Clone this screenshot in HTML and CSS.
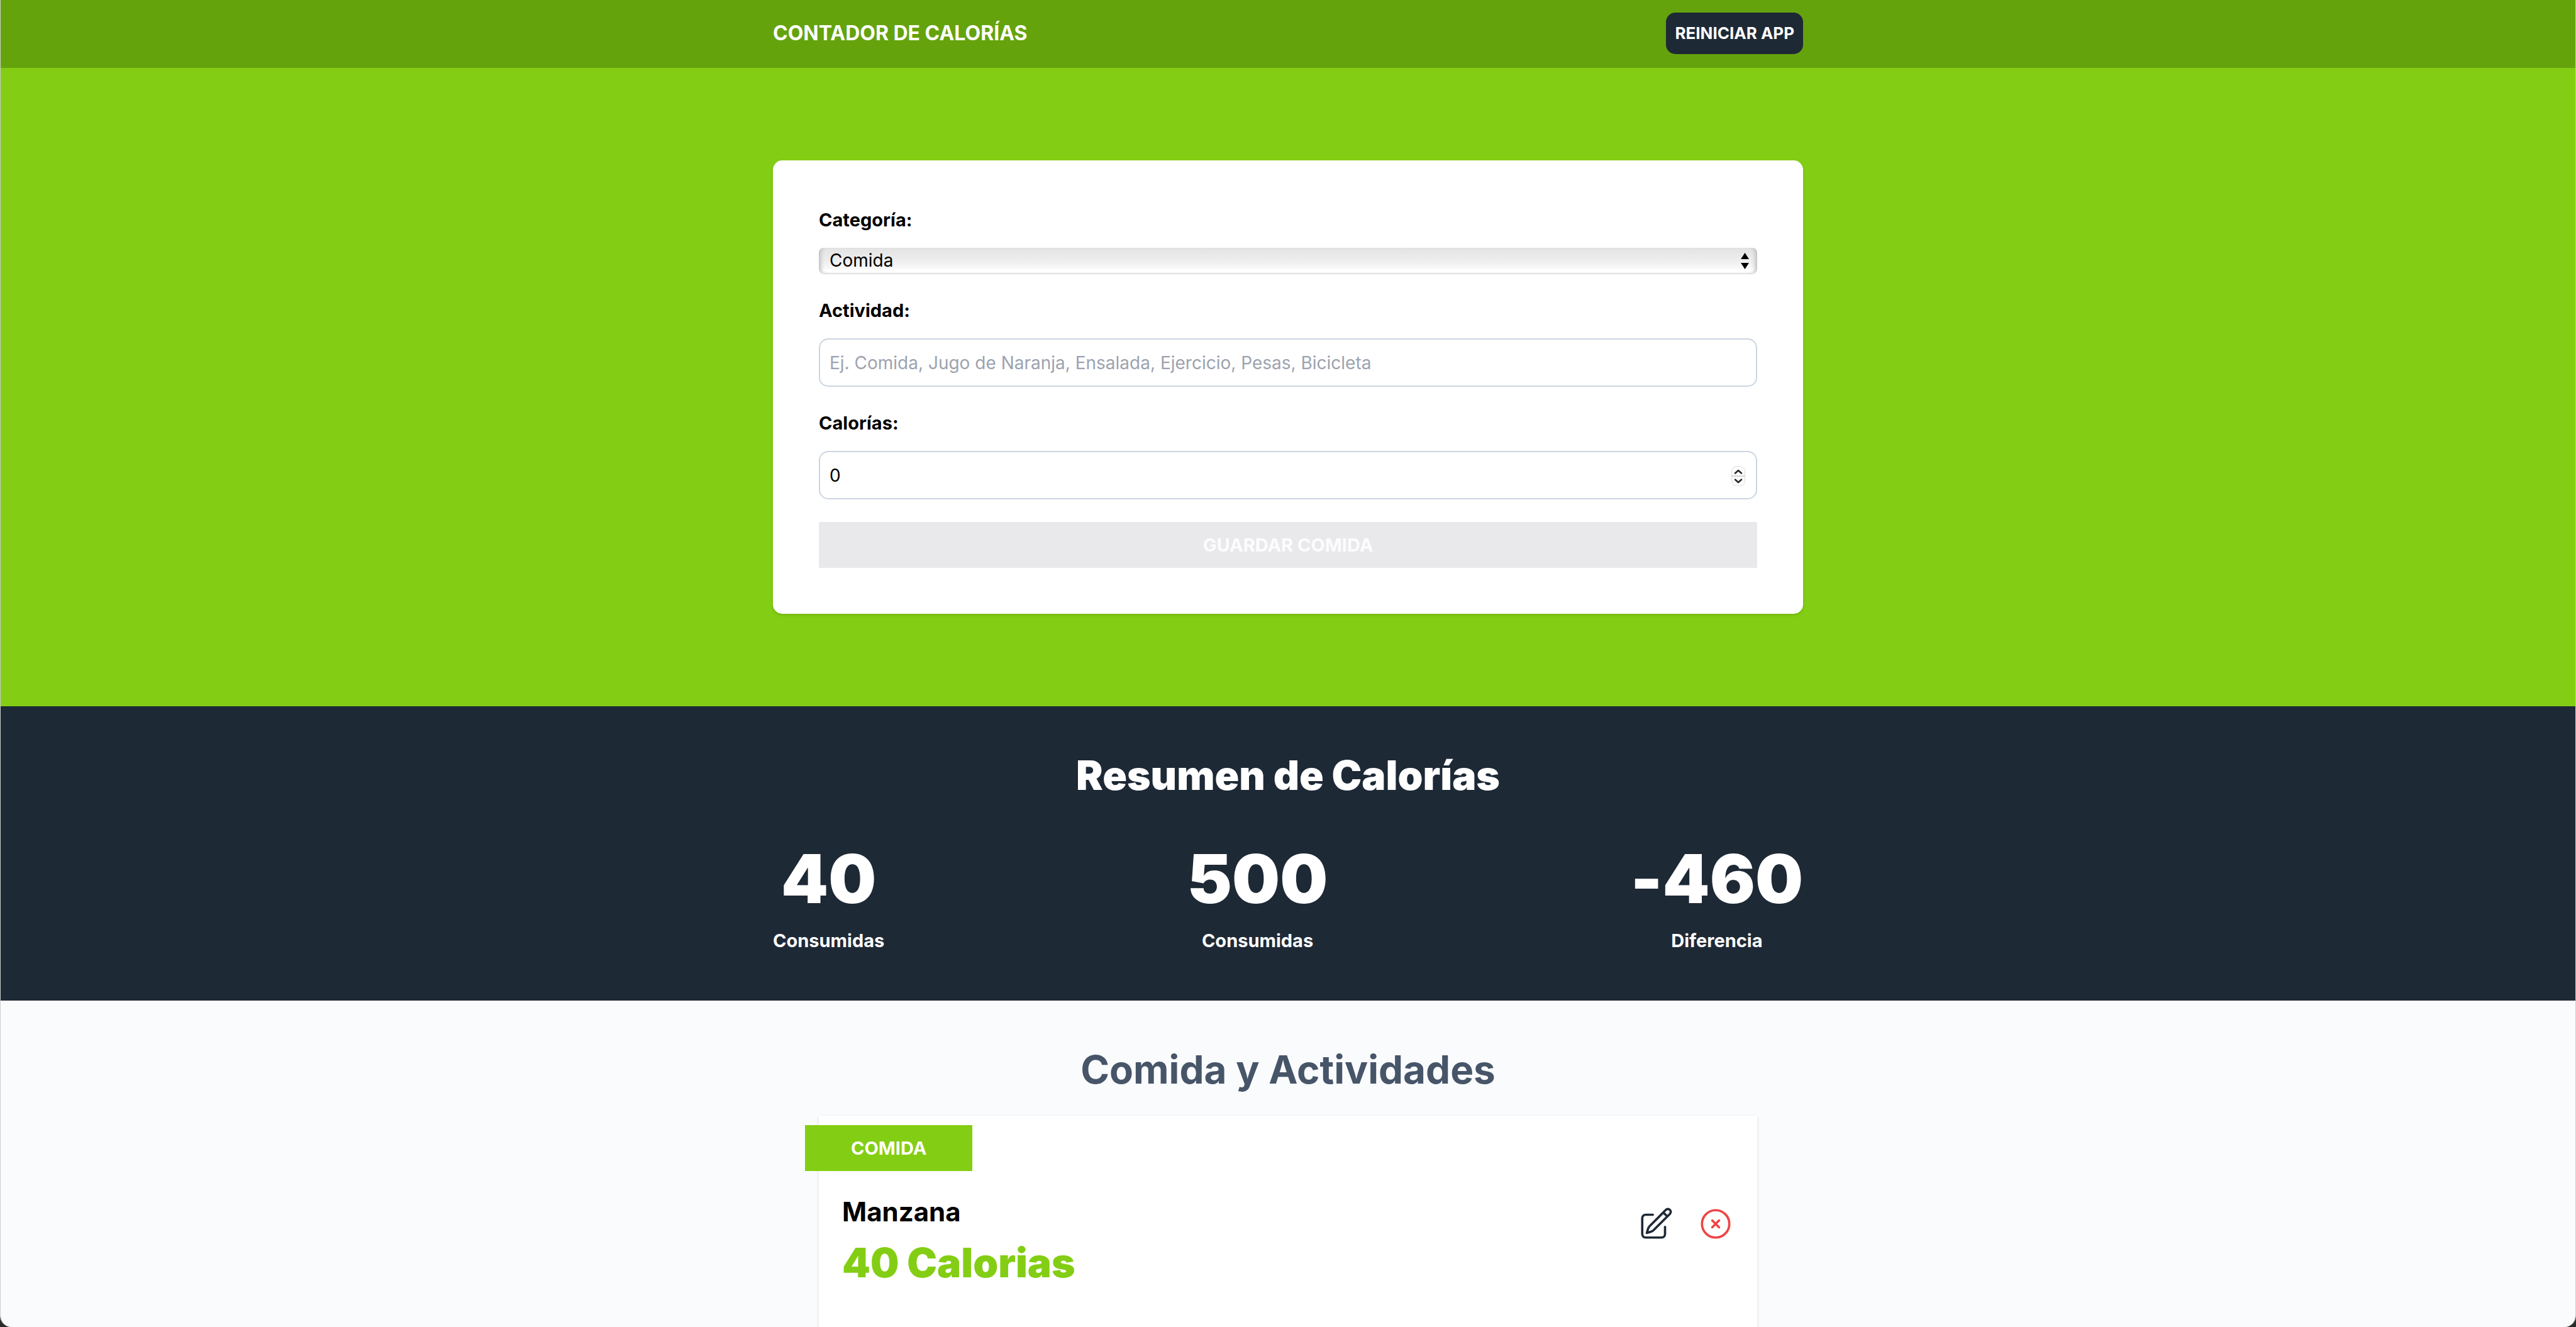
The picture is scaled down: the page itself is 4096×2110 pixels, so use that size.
FILE: index.html
```html
<!DOCTYPE html>
<html lang="es">
<head>
  <meta charset="UTF-8">
  <meta name="viewport" content="width=device-width, initial-scale=1.0">
  <title>Contador de Calorías</title>
  <link rel="stylesheet" href="styles.css">
</head>
<body>
  <div class="app">
    <header class="header">
      <div class="container header__row">
        <h1 class="header__title">Contador de Calorías</h1>
        <button class="header__reset" type="button">Reiniciar App</button>
      </div>
    </header>

    <section class="entry">
      <form class="container form">
        <div class="field">
          <label class="field__label" for="category">Categoría:</label>
          <div class="field__control">
            <select class="select" id="category">
              <option selected>Comida</option>
              <option>Ejercicio</option>
            </select>
            <svg class="select__arrows" viewBox="0 0 13 26" aria-hidden="true"><path d="M6.500 0L13 10H0zM0 16H13L6.500 26z" fill="#000"/></svg>
          </div>
        </div>
        <div class="field">
          <label class="field__label" for="activity">Actividad:</label>
          <input class="input" id="activity" type="text" placeholder="Ej. Comida, Jugo de Naranja, Ensalada, Ejercicio, Pesas, Bicicleta">
        </div>
        <div class="field">
          <label class="field__label" for="calories">Calorías:</label>
          <div class="field__control">
            <input class="input" id="calories" type="number" value="0">
            <svg class="stepper" viewBox="0 0 22 32" fill="none" aria-hidden="true">
              <rect x="0.500" y="0.500" width="21" height="31" rx="8" fill="#fdfdfd" stroke="#dcdcdc"/>
              <path d="M0.500 16H21.500" stroke="#d4d4d4" stroke-width="2"/>
              <path d="M6 11.500L11 7L16 11.500M6 21.500L11 26L16 21.500" stroke="#262626" stroke-width="2.500" stroke-linecap="round" stroke-linejoin="round"/>
            </svg>
          </div>
        </div>
        <button class="form__submit" type="submit" disabled>Guardar comida</button>
      </form>
    </section>

    <section class="summary">
      <div class="container">
        <h2 class="summary__title">Resumen de Calorías</h2>
        <div class="summary__row">
          <p class="metric"><span class="metric__value">40</span>Consumidas</p>
          <p class="metric"><span class="metric__value">500</span>Consumidas</p>
          <p class="metric"><span class="metric__value">-460</span>Diferencia</p>
        </div>
      </div>
    </section>

    <section class="container activities">
      <h2 class="activities__title">Comida y Actividades</h2>
      <article class="activity">
        <p class="activity__badge">Comida</p>
        <div class="activity__info">
          <p class="activity__name">Manzana</p>
          <p class="activity__calories">40 Calorias</p>
        </div>
        <div class="activity__actions">
          <button class="icon-button icon-button--edit" type="button" aria-label="Editar">
            <svg class="icon" viewBox="0 0 24 24" aria-hidden="true"><path d="m16.862 4.487 1.687-1.688a1.875 1.875 0 1 1 2.652 2.652L10.582 16.070a4.500 4.500 0 0 1-1.897 1.130L6 18l.8-2.685a4.500 4.500 0 0 1 1.130-1.897l8.932-8.931Zm0 0L19.500 7.125M18 14v4.750A2.250 2.250 0 0 1 15.750 21H5.250A2.250 2.250 0 0 1 3 18.750V8.250A2.250 2.250 0 0 1 5.250 6H10"/></svg>
          </button>
          <button class="icon-button icon-button--delete" type="button" aria-label="Eliminar">
            <svg class="icon" viewBox="0 0 24 24" aria-hidden="true"><path d="m9.750 9.750 4.500 4.500m0-4.500-4.500 4.500M21 12a9 9 0 1 1-18 0 9 9 0 0 1 18 0Z"/></svg>
          </button>
        </div>
      </article>
    </section>
  </div>
</body>
</html>
```
FILE: styles.css
```css
*,
*::before,
*::after {
  box-sizing: border-box;
}

body {
  margin: 0;
  background: #2b2b28;
  color: #000;
  font-family: Inter, "Liberation Sans", sans-serif;
  font-size: 29px;
  line-height: 44px;
}

h1,
h2,
p {
  margin: 0;
}

button,
input,
select {
  margin: 0;
  border: 0;
  font: inherit;
}

.app {
  height: 100vh;
  overflow-y: auto;
  scrollbar-width: none;
  background: #fafbfd;
  border: solid #c9cdcb;
  border-width: 0 1px;
  border-radius: 0 0 18px 18px;
}

.container {
  width: 100%;
  max-width: 1638px;
  margin: 0 auto;
}

/* Header */
.header {
  padding: 20px 0 22px;
  background: #65a30d;
}

.header__row {
  display: flex;
  align-items: center;
  justify-content: space-between;
}

.header__title {
  color: #fff;
  font-size: 32px;
  font-weight: 700;
  text-transform: uppercase;
}

.header__reset {
  height: 66px;
  padding: 0 14px;
  border-radius: 15px;
  background: #1e2936;
  color: #fff;
  font-size: 26px;
  font-weight: 700;
  text-transform: uppercase;
}

/* Form */
.entry {
  padding: 147px 0;
  background: #83ce14;
}

.form {
  display: grid;
  gap: 36px;
  padding: 73px;
  border-radius: 15px;
  background: #fff;
  box-shadow: 0 2px 4px rgb(0 0 0 / 14%);
}

.field {
  display: grid;
  gap: 22px;
}

.field__label {
  font-weight: 700;
}

.field__control {
  position: relative;
  display: grid;
}

.select {
  width: 100%;
  height: 42px;
  padding: 0 17px;
  appearance: none;
  border-bottom: 2px solid #dfdfdf;
  border-radius: 8px;
  background: linear-gradient(#e3e3e3, #f0f0f0 60%, #fafafa 84%, #fff 86%);
  box-shadow: inset 8px 0 6px -5px #bdbdbd, inset -8px 0 6px -5px #bdbdbd;
  color: #000;
  font-size: 28px;
  line-height: 40px;
}

.select__arrows {
  position: absolute;
  top: 8px;
  right: 13px;
  width: 13px;
  height: 26px;
  pointer-events: none;
}

.input {
  width: 100%;
  height: 77px;
  padding: 0 15px;
  border: 2px solid #cbd5e1;
  border-radius: 15px;
  background: #fff;
  color: #000;
  font-size: 28px;
  appearance: textfield;
}

.input::placeholder {
  color: #9ca3af;
  opacity: 1;
}

.stepper {
  position: absolute;
  top: 24px;
  right: 19px;
  width: 22px;
  height: 32px;
  pointer-events: none;
}

.form__submit {
  height: 73px;
  background: #e9e9eb;
  color: #fcfcfd;
  font-weight: 700;
  text-transform: uppercase;
}

/* Summary */
.summary {
  padding: 73px 0;
  background: #1e2936;
  color: #fff;
}

.summary__title {
  margin-bottom: 73px;
  font-size: 64px;
  font-weight: 900;
  line-height: 73px;
  text-align: center;
}

.summary__row {
  display: flex;
  align-items: center;
  justify-content: space-between;
}

.metric {
  display: grid;
  gap: 22px;
  justify-items: center;
  font-weight: 700;
}

.metric__value {
  font-size: 107px;
  font-variant-ligatures: no-contextual;
  font-weight: 900;
  line-height: 110px;
}

/* Activities */
.activities {
  padding: 73px;
}

.activities__title {
  margin-bottom: 37px;
  color: #475569;
  font-size: 62px;
  font-weight: 700;
  line-height: 73px;
  text-align: center;
}

.activity {
  position: relative;
  display: flex;
  align-items: center;
  justify-content: space-between;
  padding: 73px 37px;
  background: #fff;
  box-shadow: 0 2px 5px rgb(0 0 0 / 12%);
}

.activity__badge {
  position: absolute;
  top: 15px;
  left: -22px;
  padding: 0 73px;
  background: #83ce14;
  color: #fff;
  font-weight: 700;
  line-height: 73px;
  text-transform: uppercase;
}

.activity__info {
  display: grid;
  gap: 15px;
  padding-top: 51px;
}

.activity__name {
  font-size: 42px;
  font-weight: 700;
  line-height: 58px;
}

.activity__calories {
  color: #83ce14;
  font-size: 64px;
  font-weight: 900;
  line-height: 73px;
}

.activity__actions {
  display: flex;
  gap: 37px;
}

.icon-button {
  display: grid;
  padding: 0;
  background: none;
}

.icon-button--edit {
  color: #1e2936;
}

.icon-button--delete {
  color: #ef4444;
}

.icon {
  width: 58px;
  height: 58px;
  fill: none;
  stroke: currentColor;
  stroke-width: 1.5;
  stroke-linecap: round;
  stroke-linejoin: round;
}
```
